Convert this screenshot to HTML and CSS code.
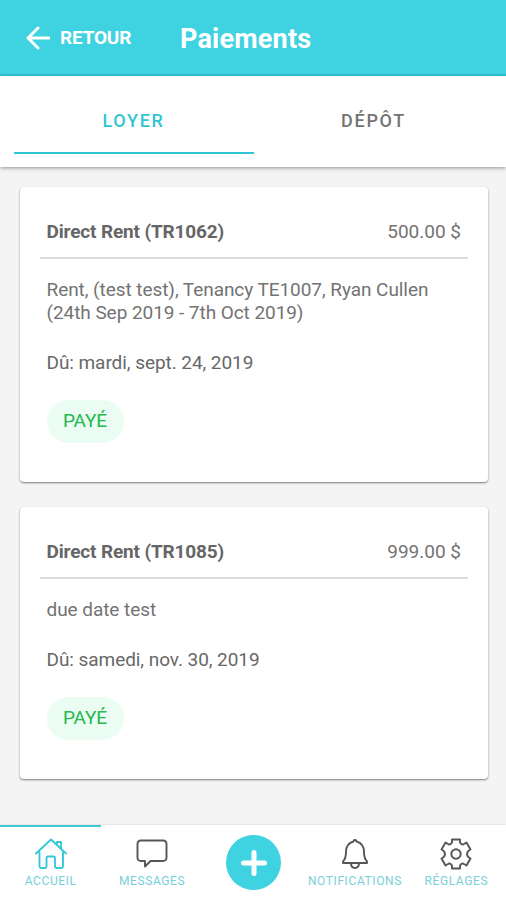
FILE: index.html
```html
<!DOCTYPE html>
<html lang="fr">
  <head>
    <meta charset="utf-8">
    <meta name="viewport" content="width=device-width, initial-scale=1">
    <title>Paiements</title>
    <link rel="stylesheet" href="styles.css">
  </head>
  <body>
    <header class="header">
      <a class="back">
        <svg width="24" height="24" viewBox="0 0 24 24"><path d="M23 12H2M12 2L2 12l10 10"/></svg>
        <span>RETOUR</span>
      </a>
      <h1 class="title">Paiements</h1>
    </header>
    <div class="tabs" role="tablist">
      <div class="tab" role="tab" aria-selected="true">LOYER</div>
      <div class="tab" role="tab" aria-selected="false">DÉPÔT</div>
    </div>
    <main class="content">
      <section class="card">
        <div class="card-header">
          <h2 class="card-title">Direct Rent (TR1062)</h2>
          <span class="amount">500.00 $</span>
        </div>
        <p class="description">Rent, (test test), Tenancy TE1007, Ryan Cullen<br>(24th Sep 2019 - 7th Oct 2019)</p>
        <p class="due">Dû: mardi, sept. 24, 2019</p>
        <span class="badge">PAYÉ</span>
      </section>
      <section class="card">
        <div class="card-header">
          <h2 class="card-title">Direct Rent (TR1085)</h2>
          <span class="amount">999.00 $</span>
        </div>
        <p class="description">due date test</p>
        <p class="due">Dû: samedi, nov. 30, 2019</p>
        <span class="badge">PAYÉ</span>
      </section>
    </main>
    <nav class="navbar">
      <a class="nav-item active">
        <svg width="32" height="32" viewBox="-16 -16 32 32"><path d="M-11.500-2V12.500Q-11.500 14-10 14H-6Q-4.500 14-4.500 12.500V4Q-4.500 2.500-3 2.500H2.500Q4 2.500 4 4V12.500Q4 14 5.500 14H10.500Q12 14 12 12.500V-2M-15-.5L0-14.500L15-.5M6-9V-12H10V-5.500"/></svg>
        <span>ACCUEIL</span>
      </a>
      <a class="nav-item">
        <svg width="32" height="32" viewBox="-16 -16 32 32"><path d="M-11-13.500H11Q14.500-13.500 14.500-10V3.500Q14.500 7 11 7H-1.500L-7 12.500V7H-11Q-14.500 7-14.500 3.500V-10Q-14.500-13.500-11-13.500Z"/></svg>
        <span>MESSAGES</span>
      </a>
      <a class="nav-item">
        <span class="add"><svg width="28" height="28" viewBox="0 0 28 28"><path d="M14 3.500V24.500M3.500 14H24.500"/></svg></span>
      </a>
      <a class="nav-item">
        <svg width="32" height="32" viewBox="-16 -16 32 32"><path d="M-12 9H12V7.500Q9 4.500 9-2Q9-10.500 1.500-12.500Q1.500-14 0-14T-1.500-12.500Q-9-10.500-9-2Q-9 4.500-12 7.500ZM-4 9Q-4 14 0 14T4 9"/></svg>
        <span>NOTIFICATIONS</span>
      </a>
      <a class="nav-item">
        <svg width="32" height="32" viewBox="-16 -16 32 32"><path d="M-4-14.500H4V-11.500Q6-8.500 8-10L10.500-11.500L14.500-4.500L12-2.800Q10 0 12 2.800L14.500 4.500L10.500 11.500L8 10Q6 8.500 4 11.500V14.500H-4V11.500Q-6 8.500-8 10L-10.500 11.500L-14.500 4.500L-12 2.800Q-10 0-12-2.800L-14.500-4.500L-10.500-11.500L-8-10Q-6-8.500-4-11.500Z"/><circle r="4.700"/></svg>
        <span>RÉGLAGES</span>
      </a>
    </nav>
  </body>
</html>
```

FILE: styles.css
```css
* {
  box-sizing: border-box;
}
html, body {
  margin: 0;
  height: 100%;
}
body {
  display: flex;
  flex-direction: column;
  overflow: hidden;
  background: #f4f4f4;
  color: #737373;
  font: 19px/23px Roboto, sans-serif;
}
h1, h2, p {
  margin: 0;
}
svg {
  display: block;
  fill: none;
  stroke: currentColor;
  stroke-linecap: round;
  stroke-linejoin: round;
}

/* Header */
.header {
  display: flex;
  align-items: center;
  flex: none;
  height: 76px;
  padding: 2px 0 0 26px;
  border-bottom: 2px solid #2bc9d9;
  background: #3fd2e1;
  color: #fff;
}
.back {
  display: flex;
  align-items: center;
  gap: 10px;
  width: 154px;
  font-weight: 700;
  letter-spacing: -.2px;
}
.back svg {
  stroke-width: 3;
}
.back span {
  margin-top: -1px;
}
.title {
  padding-top: 1px;
  font-size: 27px;
  line-height: 32px;
  font-weight: 700;
  letter-spacing: .2px;
}

/* Tabs */
.tabs {
  display: flex;
  flex: none;
  height: 91px;
  padding: 0 12px 13px 14px;
  background: #fff;
  box-shadow: 0 1px 4px rgba(0, 0, 0, .4);
}
.tab {
  flex: 1;
  padding: 33px 1px 0 0;
  border-bottom: 2px solid transparent;
  text-align: center;
  font-size: 18px;
  font-weight: 500;
  letter-spacing: 1.700px;
}
.tab[aria-selected=true] {
  border-color: #30c5d3;
  color: #30c5d3;
}

/* Payments */
.content {
  display: flex;
  flex-direction: column;
  gap: 25px;
  flex: 1;
  padding: 20px 18px 0 20px;
}
.card {
  padding: 33px 20px 39px;
  border-radius: 4px;
  background: #fff;
  box-shadow: 0 1px 2px rgba(0, 0, 0, .5);
}
.card-header {
  display: flex;
  justify-content: space-between;
  height: 39px;
  padding: 0 7px 0 6.500px;
  border-bottom: 2px solid #dcdcdc;
}
.card-title {
  color: #666;
  font-size: 19px;
  font-weight: 700;
  letter-spacing: -.15px;
}
.description {
  padding: 19px 0 0 6.500px;
  letter-spacing: -.06px;
}
.due {
  padding: 27px 0 0 6.500px;
  color: #686868;
  letter-spacing: -.06px;
}
.badge {
  display: block;
  width: 77px;
  height: 43px;
  margin: 26px 0 0 6.500px;
  border-radius: 22px;
  background: #ebfcf3;
  color: #24b94f;
  text-align: center;
  line-height: 41px;
  letter-spacing: -.1px;
}

/* Bottom navigation */
.navbar {
  display: flex;
  flex: none;
  height: 75px;
  margin-right: -1px;
  background: #fff;
  box-shadow: 0 0 2px rgba(0, 0, 0, .15);
}
.nav-item {
  display: flex;
  flex: 1 1 0;
  flex-direction: column;
  align-items: center;
  gap: 4px;
  min-width: 0;
  padding-top: 11px;
  border-top: 2px solid transparent;
  color: #555;
  font-size: 12px;
  line-height: 14px;
  letter-spacing: .6px;
}
.nav-item svg {
  stroke-width: 1.900;
}
.nav-item > span {
  color: #78d0d9;
}
.nav-item.active {
  border-color: #3fc8d6;
  color: #35c8d7;
}
.nav-item .add {
  display: flex;
  align-items: center;
  justify-content: center;
  width: 55px;
  height: 55px;
  margin-top: -3px;
  border-radius: 50%;
  background: #3fd2e1;
  color: #fff;
}
.nav-item .add svg {
  stroke-width: 5;
}
```
